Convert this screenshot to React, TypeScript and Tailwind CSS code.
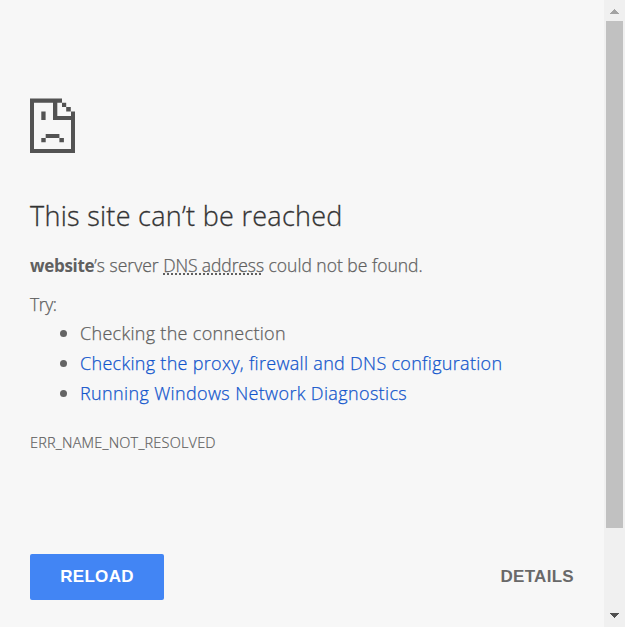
function SadPage() {
  return (
    <svg width="45" height="55" viewBox="0 0 45 55" fill="#535353" shapeRendering="geometricPrecision" className="block">
      <path d="M0 .6H32V4.7H27.3V17.9H41V13.5H45V55H0ZM4 4.7V51H41V22H23V4.7Z" fillRule="evenodd" />
      <path d="M32 4.7h4.2V9H32zM36.2 9h4.6v4.5h-4.6zM11.3 13.6h4.3V22h-4.3zM15.7 36h13.7v4H15.7zM11.3 40h4.4v4.3h-4.4zM29.4 40h4.5v4.3h-4.5z" />
    </svg>
  );
}

function Scrollbar() {
  return (
    <div className="flex h-full w-[21px] shrink-0 flex-col items-center bg-[#f0f0f0]">
      <svg width="21" height="21" shapeRendering="crispEdges" className="block shrink-0">
        <path d="M6 14L10.500 9L15 14Z" fill="#a3a3a3" />
      </svg>
      <div className="mr-[2px] h-[507px] w-[17px] self-end bg-[#c1c1c1]" />
      <svg width="21" height="21" shapeRendering="crispEdges" className="mt-auto block shrink-0">
        <path d="M6 7H15L10.500 12Z" fill="#505050" />
      </svg>
    </div>
  );
}

const SUGGESTIONS = [
  { label: "Checking the connection", style: "" },
  { label: "Checking the proxy, firewall and DNS configuration", style: "text-[#1155cc]" },
  { label: "Running Windows Network Diagnostics", style: "text-[#1155cc] tracking-[0.36px]" },
];

export default function App() {
  return (
    <div className="flex h-[627px] w-[625px] overflow-hidden bg-[#f7f7f7] font-['Open_Sans','Noto_Sans',sans-serif] text-[#606060]">
      <main className="flex flex-1 flex-col pr-[30px] pl-[30px] pt-[98px] whitespace-nowrap">
        <SadPage />
        <h1 className="mt-[45px] h-9 text-[27px] leading-9 font-light tracking-[0.27px] text-[#333] [-webkit-text-stroke:0.3px]">This site can’t be reached</h1>
        <p className="mt-[16px] h-[30px] text-[17.5px] leading-[30px] font-light [-webkit-text-stroke:0.25px]">
          <strong className="text-[17px] font-bold tracking-[-0.3px] [-webkit-text-stroke:0px]">website</strong>’s server{" "}
          <span className="tracking-[-0.1px] underline decoration-dotted decoration-[1.5px] underline-offset-1">DNS address</span> could not be found.
        </p>
        <p className="mt-[9px] h-[29px] text-[17.5px] leading-[30px] font-light tracking-[-0.4px] [-webkit-text-stroke:0.25px]">Try:</p>
        <ul className="text-[18px] leading-[30px] font-light tracking-[0.3px] [-webkit-text-stroke:0.25px]">
          {SUGGESTIONS.map(({ label, style }) => (
            <li key={label} className="flex h-[30px] items-center pl-[30px]">
              <span className="mr-[13px] size-[7px] rounded-full bg-[#646464]" />
              <span className={style}>{label}</span>
            </li>
          ))}
        </ul>
        <p className="mt-[25px] h-[20px] text-[14.5px] leading-[20px] font-light tracking-[0.2px] [-webkit-text-stroke:0.2px]">ERR_NAME_NOT_RESOLVED</p>
        <div className="mt-[101px] flex h-[46px] items-center justify-between font-['Liberation_Sans',Arial,sans-serif] text-[17px] font-bold">
          <button className="h-[46px] w-[134px] rounded-[2px] bg-[#4285f4] tracking-[0.3px] text-white">RELOAD</button>
          <button className="tracking-[0.3px] text-[#696969]">DETAILS</button>
        </div>
      </main>
      <Scrollbar />
    </div>
  );
}
